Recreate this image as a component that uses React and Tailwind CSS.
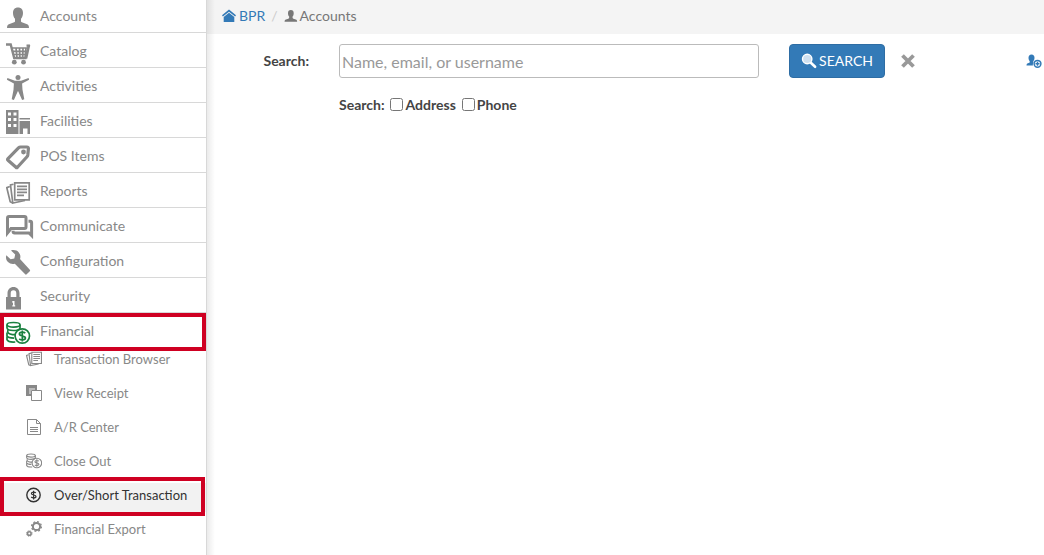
import React from 'react';

function PersonIcon({ className }) {
  return (
    <svg className={className} viewBox="0 0 28 28" fill="currentColor">
      <path d="M12 3.500c3.300 0 5 2.200 5 5.500 0 2.600-.8 4.400-2 5.800v2.400c0 .8.500 1 1.500 1.400l4 1.400c1.800.7 2.500 1.600 2.500 4H1c0-2.400.7-3.300 2.500-4l4-1.400c1-.4 1.500-.6 1.500-1.400v-2.400C7.800 13.400 7 11.600 7 9c0-3.300 1.700-5.500 5-5.500z" />
    </svg>
  );
}

function CartIcon({ className }) {
  return (
    <svg className={className} viewBox="0 0 28 28" fill="currentColor">
      <path d="M0 5.500h4.700l3.500 13.500h12.300" fill="none" stroke="currentColor" strokeWidth="2.400" />
      <path d="M20 19.500 23 6" fill="none" stroke="currentColor" strokeWidth="2.600" />
      <path d="M5.500 9h17M6.500 12.300h15M7 15.500h14M10 9l1 10M13.500 9l.4 10M17 9l-.3 10M20 9l-1 10" fill="none" stroke="currentColor" strokeWidth="1.700" />
      <circle cx="8.300" cy="23.200" r="2.400" />
      <circle cx="17.500" cy="23.200" r="2.400" />
      <path d="M20.500 5.500H24v2.300h-3.500z" />
    </svg>
  );
}

function ActivityIcon({ className }) {
  return (
    <svg className={className} viewBox="0 0 28 28" fill="currentColor">
      <circle cx="12" cy="3.500" r="2.500" />
      <path d="M1.400 4 9 6.700h6L22.600 4l.5 1.800-7 3.700.4 6.300 1.800 9.500-2.200.8-3.900-8.800h-.4l-3.900 8.800-2.200-.8 1.800-9.500.4-6.300-7-3.700z" />
    </svg>
  );
}

function BuildingIcon({ className }) {
  return (
    <svg className={className} viewBox="0 0 28 28" fill="currentColor" fillRule="evenodd">
      <path d="M0 1h12.500v24H0zM2 3.500v3h3v-3zM7.500 3.500v3h3v-3zM2 9v3h3V9zM7.500 9v3h3V9zM2 15v3h3v-3zM7.500 15v3h3v-3zM13.500 9H24v1.500H13.500zM13.500 12H24v13h-2.500v-5.500H17V25h-3.500z" />
    </svg>
  );
}

function TagIcon({ className }) {
  return (
    <svg className={className} viewBox="0 0 28 28" fill="none" stroke="currentColor">
      <path d="M14.500 3h6.300c1.300 0 1.700.6 1.600 1.800l-.6 6.200c-.1.700-.3 1.200-.8 1.700l-9.600 10.600c-.5.500-.9.500-1.400 0L2 16.200c-.5-.5-.5-1 0-1.500L12.500 3.900c.6-.6 1.100-.9 2-.9z" strokeWidth="3.200" strokeLinejoin="round" />
      <circle cx="17.500" cy="8" r="2.400" fill="currentColor" stroke="none" />
    </svg>
  );
}

function PapersIcon({ className, viewBox = '0 0 28 28' }) {
  return (
    <svg className={className} viewBox={viewBox} fill="none" stroke="currentColor" strokeWidth="1.700">
      <path d="M8.700 3.800h14.500v17H8.700z" />
      <path d="M7.500 5.200 4.500 6l2.300 18 12.200-2.500" />
      <path d="M3.800 7.500.8 8.700l3.400 14 2.400 1.200" />
      <path d="M11 7.300h10M11 10.300h10M11 13.300h10M11 16.300h7" />
    </svg>
  );
}

function ChatIcon({ className }) {
  return (
    <svg className={className} viewBox="0 0 28 28" fill="none" stroke="currentColor" strokeWidth="3">
      <path d="M1.500 19V4c0-1 .5-1.500 1.500-1.500h15.500c1 0 1.500.5 1.500 1.500v9c0 1-.5 1.500-1.500 1.500H5z" />
      <path d="M22.500 7.300h1.700c1 0 1.400.5 1.400 1.500v12.500L23 19H8.500c-1 0-1.400-.4-1.400-1.400v-.8" />
      <path d="M0 22v-7h6zM27 25v-6.500h-6z" fill="currentColor" stroke="none" />
    </svg>
  );
}

function WrenchIcon({ className }) {
  return (
    <svg className={className} viewBox="0 0 28 28" fill="currentColor">
      <path d="M5 1.400c3-.9 6-.1 7.800 2 1.600 1.900 2 4.300 1.200 6.600l9.800 10.700c.5.600.5 1 0 1.500l-3.100 3.100c-.6.600-1 .6-1.500 0L8.800 14.800c-2.500.7-5 .1-6.800-1.700C.1 11.200-.4 8.700.3 6.200l4.300 4 3.700-.8.9-3.800z" />
    </svg>
  );
}

function LockIcon({ className }) {
  return (
    <svg className={className} viewBox="0 0 28 28" fill="currentColor" fillRule="evenodd">
      <path d="M0 13h1.500V9.500C1.500 5.600 4 3 7.500 3s6 2.600 6 6.500V13H15v12.500H0zM4.700 13h5.600V9.500c0-2.200-.9-3.300-2.800-3.300S4.700 7.300 4.700 9.500zM6.300 17v1.700h.7v2.600h-.7v1.200h2.900v-1.200h-.7V17z" />
    </svg>
  );
}

function CoinsIcon({ className, viewBox = '0 0 28 28' }) {
  return (
    <svg className={className} viewBox={viewBox} fill="none" stroke="currentColor" strokeWidth="1.700">
      <ellipse cx="7.500" cy="5.800" rx="6.500" ry="2.300" />
      <path d="M1 5.800v3c0 1.500 2.800 2.700 6.500 2.700 3.300 0 6-.9 6.500-2.300V5.800" />
      <path d="M2 11.200c-1.200 2.500.8 4.100 4.500 4.400h3" />
      <path d="M1 13.500v3.400c.7 1.600 3 2.200 7 2.200" />
      <path d="M1 17.500v3.200c.8 1.800 4 2.600 8.300 2.300" />
      <circle cx="16.300" cy="17" r="7.200" />
      <path d="M19.300 14.200c-.8-.7-1.800-1-3-1-1.800 0-2.900.7-2.900 1.900 0 2.700 6 1.200 6 3.900 0 1.200-1.200 1.900-3 1.900-1.300 0-2.400-.4-3.200-1.100M16.300 11.500v11" />
    </svg>
  );
}

function CopyIcon({ className }) {
  return (
    <svg className={className} viewBox="0 0 16 16">
      <path d="M0 0h11v5H5v6H0z" fill="currentColor" />
      <path d="M3 3h6v2H5v4H3z" fill="#bbb" />
      <path d="M5.500 5.500h10v10h-10z" fill="#fff" stroke="currentColor" />
    </svg>
  );
}

function PageIcon({ className }) {
  return (
    <svg className={className} viewBox="0 0 16 16" fill="none" stroke="currentColor">
      <path d="M1.500.5h9l4 4v11h-13zM10.500.5v4h4M4 8.500h8M4 10.500h8M4 12.500h8" />
    </svg>
  );
}

function DollarIcon({ className }) {
  return (
    <svg className={className} viewBox="0 0 16 16" fill="none" stroke="currentColor" strokeWidth="1.400">
      <circle cx="7.500" cy="8" r="6.700" />
      <path d="M9.900 5.900c-.6-.5-1.400-.8-2.300-.8-1.300 0-2.200.5-2.200 1.400 0 2 4.600 1 4.600 3 0 .9-1 1.400-2.300 1.400-1 0-1.900-.3-2.500-.9M7.600 3.700v8.700" strokeWidth="1.200" />
    </svg>
  );
}

function GearsIcon({ className }) {
  return (
    <svg className={className} viewBox="0 0 16 16" fill="none" stroke="currentColor">
      <circle cx="10.500" cy="5.500" r="3.600" strokeWidth="2" />
      <circle cx="10.500" cy="5.500" r="4.900" strokeWidth="1.300" strokeDasharray="1.900 1.950" />
      <circle cx="3.300" cy="12.500" r="1.800" strokeWidth="1.600" />
      <circle cx="3.300" cy="12.500" r="2.800" strokeWidth="1" strokeDasharray="1.100 1.100" />
    </svg>
  );
}

function HomeIcon({ className }) {
  return (
    <svg className={className} viewBox="0 0 14 14" fill="currentColor">
      <path d="M7 .5 14 6.300l-.9 1.200L7 2.700.9 7.500 0 6.300z" />
      <path d="M7 3.800l5.300 4.100V13H1.700V7.900z" />
    </svg>
  );
}

function SearchIcon({ className }) {
  return (
    <svg className={className} viewBox="0 0 16 16">
      <path d="m9.800 9.800 4.300 4" stroke="#fff" strokeWidth="2.600" strokeLinecap="round" />
      <circle cx="6.200" cy="6" r="4.700" fill="#cfe0f0" stroke="#fff" strokeWidth="1.400" />
    </svg>
  );
}

function CloseIcon({ className }) {
  return (
    <svg className={className} viewBox="0 0 14 14">
      <path d="m1.500 1.500 11 11M12.500 1.500l-11 11" stroke="currentColor" strokeWidth="3.800" />
    </svg>
  );
}

function AddUserIcon({ className }) {
  return (
    <svg className={className} viewBox="0 0 16 16" fill="currentColor">
      <path d="M5.500 1.500c2 0 3 1.300 3 3.300 0 1.500-.5 2.600-1.200 3.400v1.300c-.4.900-.6 1.900-.4 3H.5c0-1.400.4-1.900 1.500-2.300l1.700-.7V8.200C3 7.400 2.500 6.300 2.500 4.800c0-2 1-3.300 3-3.300z" />
      <circle cx="11.500" cy="10.800" r="3.400" fill="#fff" stroke="currentColor" strokeWidth="1.500" />
      <path d="M11.500 8.800v4M9.500 10.800h4" stroke="currentColor" strokeWidth="1.400" />
    </svg>
  );
}

const menu = [
  { label: 'Accounts', Icon: PersonIcon },
  { label: 'Catalog', Icon: CartIcon },
  { label: 'Activities', Icon: ActivityIcon },
  { label: 'Facilities', Icon: BuildingIcon },
  { label: 'POS Items', Icon: TagIcon },
  { label: 'Reports', Icon: PapersIcon },
  { label: 'Communicate', Icon: ChatIcon },
  { label: 'Configuration', Icon: WrenchIcon },
  { label: 'Security', Icon: LockIcon },
];

const financialMenu = [
  { label: 'Transaction Browser', Icon: PapersIcon, viewBox: '0 2 24 24' },
  { label: 'View Receipt', Icon: CopyIcon },
  { label: 'A/R Center', Icon: PageIcon },
  { label: 'Close Out', Icon: CoinsIcon, viewBox: '0 2 24 24' },
  { label: 'Over/Short Transaction', Icon: DollarIcon, active: true },
  { label: 'Financial Export', Icon: GearsIcon },
];

function Sidebar() {
  return (
    <nav className="w-[207px] shrink-0 overflow-hidden bg-white border-r border-[#d8d8d8] text-sm text-[#888]">
      <ul className="-mt-0.5">
        {menu.map(({ label, Icon }) => (
          <li key={label} className="h-[35px] border-b border-[#d8d8d8]">
            <a href="#" className="flex items-start gap-1.5 pl-1.5">
              <Icon className="w-7 h-7 mt-1.5 shrink-0" />
              <span className="leading-9">{label}</span>
            </a>
          </li>
        ))}
        <li>
          <a href="#" className="relative flex items-start gap-1.5 pl-1.5 h-[35px]">
            <CoinsIcon className="w-7 h-7 mt-1.5 shrink-0 text-[#1a8040]" />
            <span className="leading-9">Financial</span>
            <span className="absolute inset-x-0 top-0 h-[38px] border-4 border-[#cf0022]" />
          </a>
          {/* Financial submenu */}
          <ul className="-mt-1.5 text-[13px]">
            {financialMenu.map(({ label, Icon, viewBox, active }) => (
              <li key={label} className="relative h-[34px] pt-[5px]">
                <a
                  href="#"
                  className={
                    active
                      ? 'flex items-center gap-3 h-[29px] pl-[26px] pb-[5px] bg-[#f2f2f2] text-[#333]'
                      : 'flex items-center gap-3 h-[29px] pl-[26px] pb-[5px]'
                  }
                >
                  <Icon className="w-4 h-4 shrink-0" viewBox={viewBox} />
                  <span className="whitespace-nowrap">{label}</span>
                </a>
                {active && <span className="absolute left-0 right-px -top-px h-[39px] border-4 border-[#cf0022]" />}
              </li>
            ))}
          </ul>
        </li>
      </ul>
    </nav>
  );
}

function App() {
  return (
    <div className="flex min-h-screen bg-white font-['Lato',sans-serif] text-sm text-[#444]">
      <Sidebar />

      <div className="relative flex-1 min-w-0">
        {/* Breadcrumb */}
        <header className="flex items-center h-[34px] pl-[15px] pb-0.5 bg-[#f4f4f4] text-[#777]">
          <a href="#" className="flex items-center gap-[3px] text-[#337ab7]">
            <HomeIcon className="w-3.5 h-3.5" />
            BPR
          </a>
          <span className="px-1.5 text-[#ccc]">/</span>
          <span className="flex items-center">
            <PersonIcon className="w-4 h-4" />
            Accounts
          </span>
        </header>

        {/* Search form */}
        <form className="pt-2.5" onSubmit={(e) => e.preventDefault()}>
          <div className="flex items-center pr-0.5">
            <label htmlFor="search" className="w-[102px] mr-[30px] shrink-0 text-right font-bold">
              Search:
            </label>
            <input
              id="search"
              type="text"
              placeholder="Name, email, or username"
              className="flex-1 min-w-0 max-w-[420px] h-[34px] px-0.5 text-base border border-[#bbb] rounded-[3px] placeholder:text-[#999]"
            />
            <button
              type="submit"
              className="flex items-center justify-center gap-0.5 w-24 h-[34px] ml-[30px] shrink-0 bg-[#337ab7] border border-[#2e6da4] rounded text-white"
            >
              <SearchIcon className="w-4 h-4" />
              <span>SEARCH</span>
            </button>
            <button type="button" aria-label="Clear" className="ml-4 text-[#999]">
              <CloseIcon className="w-3.5 h-3.5" />
            </button>
            <a href="#" aria-label="Add account" className="ml-auto text-[#337ab7]">
              <AddUserIcon className="w-4 h-4" />
            </a>
          </div>
          <div className="flex items-center mt-[17px] ml-[132px] font-bold">
            <span>Search:</span>
            <input id="address" type="checkbox" className="w-[13px] h-[13px] mb-0.5 ml-[5px] mr-[3px]" />
            <label htmlFor="address">Address</label>
            <input id="phone" type="checkbox" className="w-[13px] h-[13px] mb-0.5 ml-1.5 mr-0.5" />
            <label htmlFor="phone">Phone</label>
          </div>
        </form>

        {/* Shadow cast by the sidebar */}
        <div className="absolute inset-y-0 left-0 w-2 bg-gradient-to-r from-black/8 to-transparent pointer-events-none" />
      </div>
    </div>
  );
}

export default App;
